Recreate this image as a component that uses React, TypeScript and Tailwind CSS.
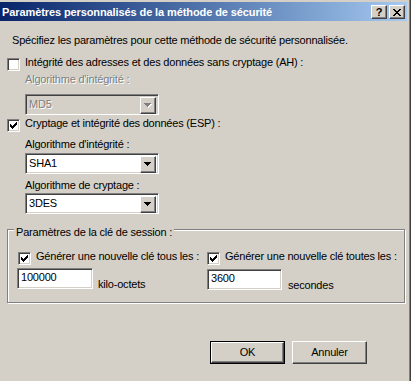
const sunken =
  'border border-t-[#808080] border-l-[#808080] border-b-white border-r-white shadow-[inset_1px_1px_0_#404040,inset_-1px_-1px_0_#d4d0c8]'
const raised =
  'border border-t-white border-l-white border-b-[#404040] border-r-[#404040] shadow-[inset_-1px_-1px_0_#808080,inset_1px_1px_0_#d4d0c8]'
const dimText = 'text-[#808080] [text-shadow:1px_1px_0_#fff]'

function Check({ checked }: { checked?: boolean }) {
  return (
    <span className={`mt-[2px] flex h-[13px] w-[13px] shrink-0 items-center justify-center bg-white ${sunken}`}>
      {checked && (
        <svg width="7" height="7" viewBox="0 0 7 7" shapeRendering="crispEdges">
          <path
            fill="#000"
            d="M6 0h1v1H6z M5 1h2v1H5z M0 2h1v1H0z M4 2h3v1H4z M0 3h2v1H0z M3 3h3v1H3z M0 4h5v1H0z M1 5h3v1H1z M2 6h1v1H2z"
          />
        </svg>
      )}
    </span>
  )
}

function Arrow({ disabled }: { disabled?: boolean }) {
  const d = 'M0 0h7v1H0z M1 1h5v1H1z M2 2h3v1H2z M3 3h1v1H3z'
  return (
    <svg width="8" height="5" viewBox="0 0 8 5" shapeRendering="crispEdges">
      {disabled && <path fill="#fff" transform="translate(1 1)" d={d} />}
      <path fill={disabled ? '#808080' : '#000'} d={d} />
    </svg>
  )
}

function Combo({ value, disabled }: { value: string; disabled?: boolean }) {
  return (
    <div className={`flex h-[21px] w-[134px] p-[2px] ${sunken} ${disabled ? 'bg-[#d4d0c8]' : 'bg-white'}`}>
      <div className={`flex flex-1 items-center pl-[1px] ${disabled ? dimText : ''}`}>{value}</div>
      <div className={`flex h-[17px] w-[16px] items-center justify-center bg-[#d4d0c8] ${raised}`}>
        <Arrow disabled={disabled} />
      </div>
    </div>
  )
}

function Field({ value, w }: { value: string; w: string }) {
  return <div className={`h-[21px] ${w} bg-white p-[2px] pl-[3px] ${sunken}`}>{value}</div>
}

function CheckRow({ checked, label }: { checked?: boolean; label: string }) {
  return (
    <div className="flex items-start">
      <Check checked={checked} />
      <span className="ml-[5px] whitespace-nowrap">{label}</span>
    </div>
  )
}

function Button({ label, isDefault }: { label: string; isDefault?: boolean }) {
  return (
    <div className={`h-[23px] w-[75px] ${isDefault ? 'border border-black' : ''}`}>
      <div className={`flex h-full w-full items-center justify-center ${raised}`}>{label}</div>
    </div>
  )
}

export default function App() {
  return (
    <div className="h-[381px] w-[411px] overflow-hidden border-r border-r-[#404040] bg-[#d4d0c8] font-['Liberation_Sans',Arial,sans-serif] text-[11px] leading-[13px] tracking-[-0.2px] text-black shadow-[inset_-1px_0_0_#808080]">
      <div className="flex flex-col pr-[3px] pt-[2px]">
        {/* title bar */}
        <div className="flex h-[19px] items-start bg-linear-to-r from-[#0a246a] to-[#a6caf0]">
          <span className="mt-[4px] flex-1 pl-[2px] font-bold tracking-[-0.1px] text-white">
            Paramètres personnalisés de la méthode de sécurité
          </span>
          <div className="mt-[3px] flex gap-[2px] pr-[2px]">
            <div className={`flex h-[14px] w-[16px] items-center justify-center bg-[#d4d0c8] text-[11px] font-bold leading-none ${raised}`}>
              ?
            </div>
            <div className={`flex h-[14px] w-[16px] items-center justify-center bg-[#d4d0c8] ${raised}`}>
              <svg width="8" height="7" viewBox="0 0 8 7" shapeRendering="crispEdges">
                <path
                  fill="#000"
                  d="M0 0h2v1H0z M6 0h2v1H6z M1 1h2v1H1z M5 1h2v1H5z M2 2h4v1H2z M3 3h2v1H3z M2 4h4v1H2z M1 5h2v1H1z M5 5h2v1H5z M0 6h2v1H0z M6 6h2v1H6z"
                />
              </svg>
            </div>
          </div>
        </div>

        <p className="ml-[12px] mt-[13px]">Spécifiez les paramètres pour cette méthode de sécurité personnalisée.</p>

        <div className="ml-[7px] mt-[9px]">
          <CheckRow label="Intégrité des adresses et des données sans cryptage (AH) :" />
        </div>
        <div className={`ml-[25px] mt-[2px] ${dimText}`}>Algorithme d'intégrité :</div>
        <div className="ml-[25px] mt-[8px]">
          <Combo value="MD5" disabled />
        </div>

        <div className="ml-[7px] mt-[2px]">
          <CheckRow checked label="Cryptage et intégrité des données (ESP) :" />
        </div>
        <div className="ml-[25px] mt-[6px]">Algorithme d'intégrité :</div>
        <div className="ml-[25px] mt-[2px]">
          <Combo value="SHA1" />
        </div>
        <div className="ml-[25px] mt-[5px]">Algorithme de cryptage :</div>
        <div className="ml-[25px] mt-[1px]">
          <Combo value="3DES" />
        </div>

        {/* session key group */}
        <div className="relative ml-[7px] mt-[15px] h-[74px] w-[398px] border border-[#808080] shadow-[inset_1px_1px_0_#fff,1px_1px_0_#fff]">
          <span className="absolute -top-[4px] left-[6px] bg-[#d4d0c8] px-[2px]">Paramètres de la clé de session :</span>
          <div className="grid grid-cols-[190px_1fr] pl-[9px] pt-[20px]">
            <div className="flex flex-col">
              <div className="ml-[1px]">
                <CheckRow checked label="Générer une nouvelle clé tous les :" />
              </div>
              <div className="mt-[3px] flex items-start">
                <Field value="100000" w="w-[76px]" />
                <span className="ml-[5px] mt-[10px]">kilo-octets</span>
              </div>
            </div>
            <div className="flex flex-col">
              <CheckRow checked label="Générer une nouvelle clé toutes les :" />
              <div className="mt-[4px] flex items-start">
                <Field value="3600" w="w-[75px]" />
                <span className="ml-[6px] mt-[10px]">secondes</span>
              </div>
            </div>
          </div>
        </div>

        <div className="ml-[210px] mt-[38px] flex gap-[7px]">
          <Button label="OK" isDefault />
          <Button label="Annuler" />
        </div>
      </div>
    </div>
  )
}
